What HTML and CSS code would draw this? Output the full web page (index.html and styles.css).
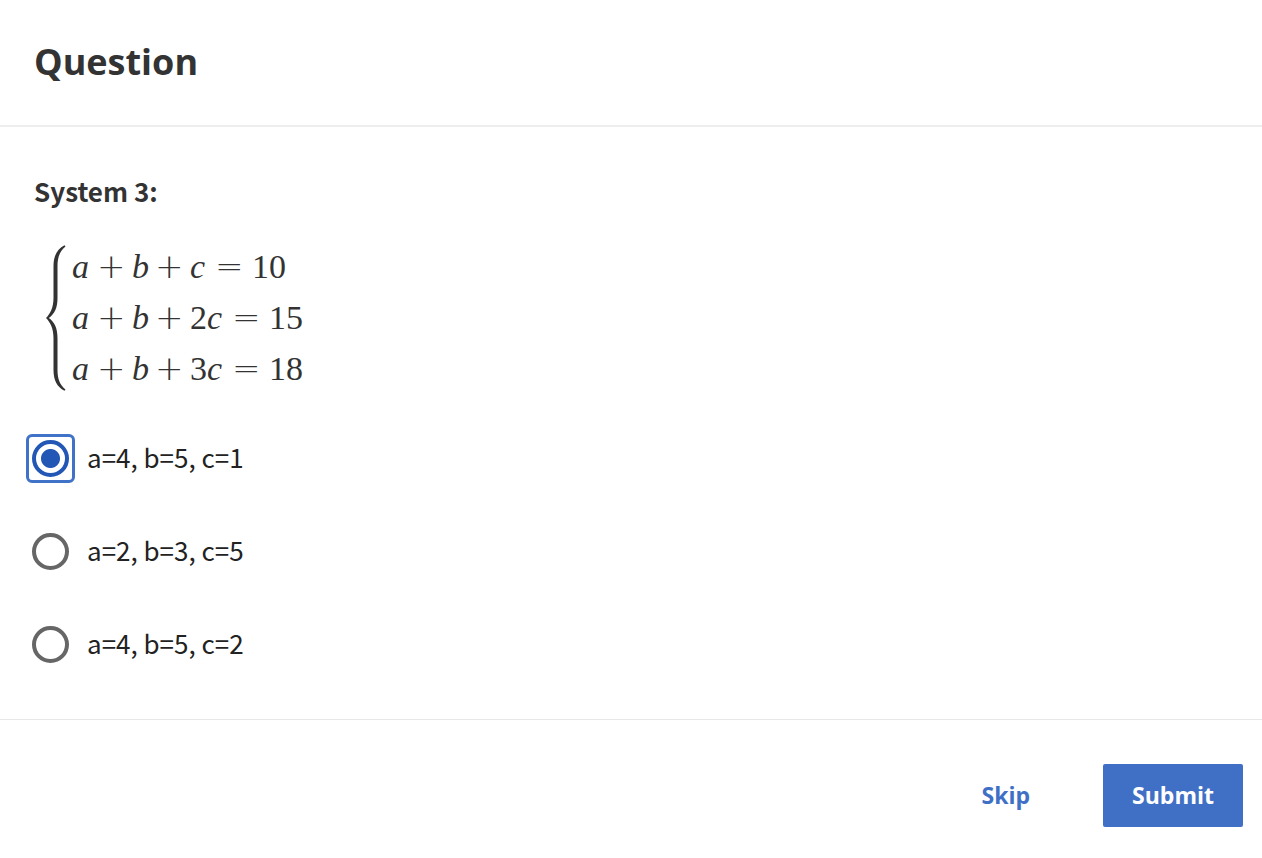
FILE: index.html
```html
<!DOCTYPE html>
<html lang="en">
<head>
<meta charset="utf-8">
<title>Question</title>
<link rel="stylesheet" href="styles.css">
</head>
<body>
<form class="question">
  <header class="question-header">
    <h1 class="question-title">Question</h1>
  </header>
  <main class="question-body">
    <h2 class="prompt" id="prompt">System 3:</h2>
    <div class="system">
      <svg class="brace" viewBox="0 0 20 148" aria-hidden="true"><path d="M18.500 1.200C11 5 7.500 12 7.500 22V54C7.500 64 4 70 0 74C4 78 7.500 84 7.500 94V126C7.500 136 11 143 18.500 146.800L19.500 145.500C14 141 11.500 135 11.500 126V94C11.500 84 8.500 78 2.800 74C8.500 70 11.500 64 11.500 54V22C11.500 13 14 7 19.500 2.500Z"/></svg>
      <div class="equations">
        <div class="equation"><i>a</i><span class="op">+</span><i class="narrow">b</i><span class="op">+</span><i class="narrow">c</i><span class="op rel">=</span>10</div>
        <div class="equation"><i>a</i><span class="op">+</span><i class="narrow">b</i><span class="op">+</span>2<i class="narrow">c</i><span class="op rel">=</span>15</div>
        <div class="equation"><i>a</i><span class="op">+</span><i class="narrow">b</i><span class="op">+</span>3<i class="narrow">c</i><span class="op rel">=</span>18</div>
      </div>
    </div>
    <div class="options" role="radiogroup" aria-labelledby="prompt">
      <label class="option"><input class="radio" type="radio" name="answer" checked><span class="option-text">a=4, b=5, c=1</span></label>
      <label class="option"><input class="radio" type="radio" name="answer"><span class="option-text">a=2, b=3, c=5</span></label>
      <label class="option"><input class="radio" type="radio" name="answer"><span class="option-text">a=4, b=5, c=2</span></label>
    </div>
  </main>
  <footer class="question-footer">
    <button class="button skip" type="button">Skip</button>
    <button class="button submit" type="submit">Submit</button>
  </footer>
</form>
</body>
</html>
```
FILE: styles.css
```css
body {
  margin: 0;
  background: #fff;
  color: #333;
}

.question-header {
  padding: 35px 34px 37px;
  border-bottom: 2px solid #eee;
}

.question-title {
  margin: 0;
  font: 700 36px/53px "Open Sans", sans-serif;
}

.question-body {
  padding: 44px 34px 45px;
}

.prompt {
  margin: 0;
  font: 700 26px/40px "Noto Sans CJK SC", sans-serif;
}

.system {
  display: flex;
  align-items: center;
  gap: 6px;
  margin-top: 30px;
  padding-left: 12px;
}

.brace {
  width: 20px;
  height: 148px;
  fill: #333;
}

.equation {
  display: flex;
  font: 34px/51px "Liberation Serif", serif;
}

.equation i {
  width: 18px;
}

.equation .narrow {
  width: 16px;
}

.op {
  width: 26px;
  margin: 0 9px 0 7px;
  font-family: "DejaVu Sans Light", "DejaVu Sans", sans-serif;
  font-weight: 200;
  text-align: center;
}

.rel {
  margin: 0 11px 0 9px;
}

.options {
  display: grid;
  gap: 33px;
  margin-top: 34px;
}

.option {
  display: flex;
  align-items: center;
  gap: 18px;
  height: 60px;
  color: #222;
  font: 26px/40px "Noto Sans CJK SC", sans-serif;
}

.option-text {
  padding-bottom: 2px;
}

.radio {
  appearance: none;
  box-sizing: border-box;
  flex: none;
  width: 37px;
  height: 37px;
  margin: 0 0 0 -2px;
  border: 4px solid #666;
  border-radius: 50%;
}

.radio:checked {
  border-color: #2257b5;
  background: radial-gradient(circle, #2257b5 9px, #fff 10px);
}

.option:has(.radio:checked) {
  position: relative;
}

.option:has(.radio:checked)::before {
  content: "";
  position: absolute;
  left: -8px;
  box-sizing: border-box;
  width: 49px;
  height: 49px;
  border: 3px solid #4072c8;
  border-radius: 6px;
}

.question-footer {
  display: flex;
  justify-content: flex-end;
  gap: 44px;
  padding: 44px 19px 32px;
  border-top: 1px solid #e8e8e8;
}

.button {
  padding: 14px 29px;
  border: 0;
  border-radius: 2px;
  background: none;
  color: #4070c6;
  font: 700 23px/35px "Open Sans", sans-serif;
}

.submit {
  background: #4070c6;
  color: #fff;
}
```
